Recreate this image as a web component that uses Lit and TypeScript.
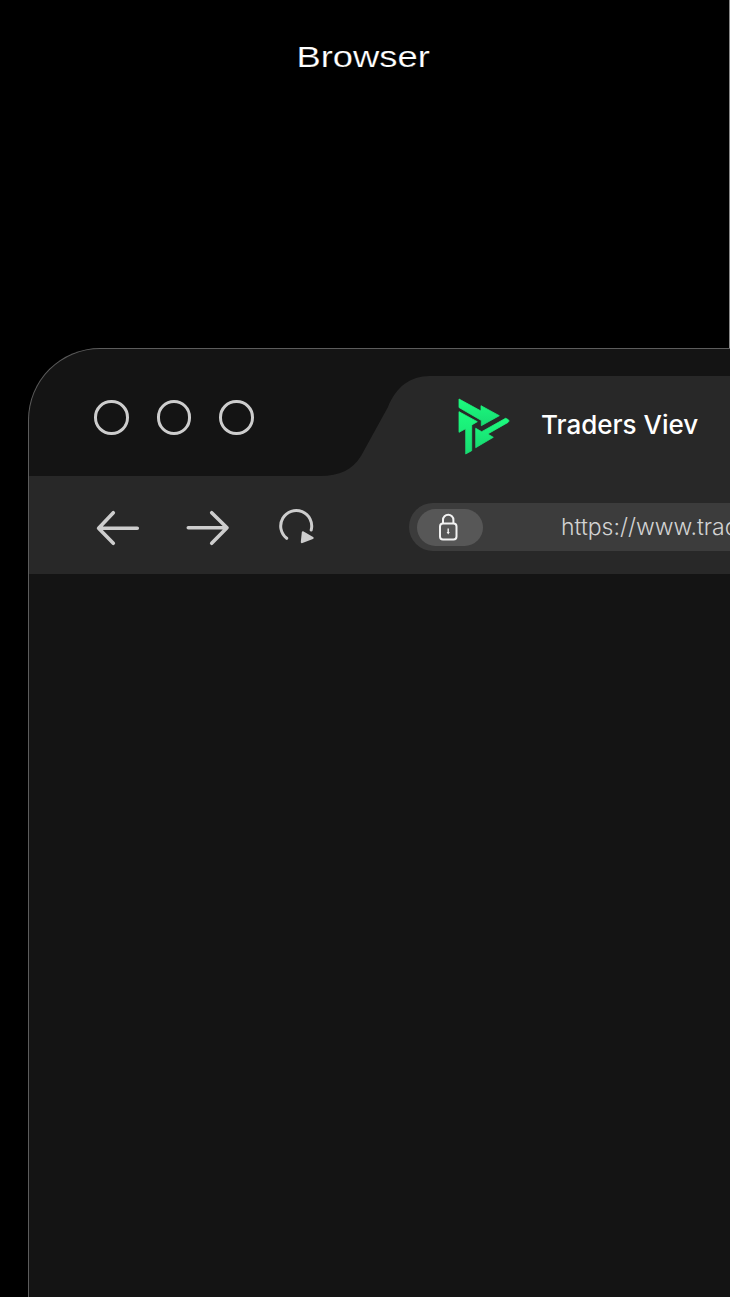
import { LitElement, html, css } from "lit";
import { customElement } from "lit/decorators.js";

@customElement("app-root")
export class AppRoot extends LitElement {
  static styles = css`
    :host {
      display: flex;
      flex-direction: column;
      width: 730px;
      height: 1297px;
      overflow: hidden;
      background: #000;
      font-family: Inter, "Liberation Sans", sans-serif;
    }
    .hero {
      box-sizing: border-box;
      flex: 0 0 348px;
      width: 730px;
      border-right: 1px solid #8a8a8a;
      display: flex;
      justify-content: center;
      padding-top: 39px;
      padding-right: 3px;
    }
    .hero h1 {
      margin: 0;
      height: 36px;
      font: 400 29px/36px "Liberation Sans", sans-serif;
      color: #fff;
      transform: scaleX(1.255);
      -webkit-text-stroke: 0.2px #000;
    }
    .frame {
      box-sizing: border-box;
      flex: 1 0 auto;
      width: 1100px;
      margin-left: 28px;
      border: 1px solid #5c5c5c;
      border-width: 1px 0 0 1px;
      border-top-left-radius: 72px;
      background: #141414;
      display: flex;
      flex-direction: column;
      overflow: hidden;
    }
    .tabbar {
      flex: 0 0 127px;
      display: flex;
      align-items: flex-end;
    }
    .lights {
      display: flex;
      gap: 28px;
      width: 226px;
      padding-left: 65px;
      align-self: flex-start;
      padding-top: 51px;
    }
    .light {
      box-sizing: border-box;
      width: 34.5px;
      height: 34.5px;
      border: 3px solid #cdcdcd;
      border-radius: 50%;
    }
    .tab-curve {
      display: block;
      flex: none;
    }
    .tab {
      flex: 1;
      height: 100px;
      background: #282828;
      display: flex;
      align-items: center;
      gap: 31px;
      padding-left: 28px;
    }
    .logo {
      display: block;
      flex: none;
      margin-top: -1px;
    }
    .tab-title {
      font-size: 26px;
      font-weight: 500;
      color: #fff;
      white-space: nowrap;
      margin-top: -3px;
    }
    .toolbar {
      flex: 0 0 98px;
      background: #282828;
      display: flex;
      align-items: center;
      padding-left: 380px;
      position: relative;
    }
    .nav {
      position: absolute;
      left: 0;
      top: 0;
      display: block;
    }
    .url {
      flex: 1;
      height: 48px;
      margin-top: 4px;
      background: #3c3c3c;
      border-radius: 24px 0 0 24px;
      display: flex;
      align-items: center;
      padding-left: 8px;
      gap: 78px;
    }
    .lock {
      flex: none;
      width: 66px;
      height: 37px;
      border-radius: 18.5px;
      background: #575757;
      display: flex;
      align-items: center;
      justify-content: center;
      padding-right: 4px;
      box-sizing: border-box;
    }
    .lock svg {
      display: block;
    }
    .url-text {
      font-size: 23px;
      font-weight: 300;
      color: #d2d2d2;
      white-space: nowrap;
    }
    .content {
      flex: 1;
      background: #141414;
    }
  `;

  render() {
    return html`
      <div class="hero"><h1>Browser</h1></div>
      <div class="frame">
        <div class="tabbar">
          <div class="lights">
            <div class="light"></div>
            <div class="light"></div>
            <div class="light"></div>
          </div>
          <svg class="tab-curve" width="110" height="100" viewBox="320 376 110 100">
            <path d="M320 476C340 476 352 470 361 456L388 407C396 387 410 376 430 376V476Z" fill="#282828" />
          </svg>
          <div class="tab">
            <svg class="logo" width="52" height="58" viewBox="458 397 52 58">
              <defs>
                <linearGradient id="g" x1="0" y1="0" x2="0" y2="1">
                  <stop offset="0" stop-color="#1cfb7e" />
                  <stop offset="1" stop-color="#17dc72" />
                </linearGradient>
              </defs>
              <g fill="url(#g)" stroke="url(#g)" stroke-width=".8" stroke-linejoin="round">
                <path d="M459 399L481 411V405.7L499.3 415.7 481.3 425.7V420.4L459 407.5Z" />
                <path d="M459 411.7L477.3 421.7 471.7 425V450.7L465.7 454V428.7L459 432.3Z" />
                <path d="M475.7 428.3V447.7L493.3 437.3 487.7 434 508 422.4C509.4 421.4 509 420 508 419.5L505.6 418.3 481.7 431.7Z" />
              </g>
            </svg>
            <span class="tab-title">Traders Viev</span>
          </div>
        </div>
        <div class="toolbar">
          <svg class="nav" width="300" height="98" viewBox="29 476 300 98" fill="none" stroke="#cdcdcd" stroke-width="3.6" stroke-linecap="round" stroke-linejoin="round">
            <path d="M137.3 528.3H98.6M113.3 512.7L98.6 528.3 113.3 543.3" />
            <path d="M188.3 527.7H227M211.7 512.7L227 527.7 211.7 543.3" />
            <path d="M286.7 538.3A15.5 15.5 0 1 1 311.2 530" stroke-width="3" />
            <path d="M303 532.5L312.5 538 302 542Z" fill="#cdcdcd" stroke-width="2.4" />
          </svg>
          <div class="url">
            <div class="lock">
              <svg width="20" height="28" viewBox="0 0 20 28" fill="none" stroke="#f2f2f2" stroke-width="2">
                <rect x="2" y="10.5" width="16.5" height="16" rx="3" />
                <path d="M5 10.5V7a5.2 5.2 0 0 1 10.4 0v3.5" />
                <path d="M10.2 15.5v4" stroke-width="1.4" />
                <path d="M8.6 19h3.2l-1.6 2.4z" fill="#f2f2f2" stroke="none" />
              </svg>
            </div>
            <span class="url-text">https://www.tradersview.com</span>
          </div>
        </div>
        <div class="content"></div>
      </div>
    `;
  }
}
